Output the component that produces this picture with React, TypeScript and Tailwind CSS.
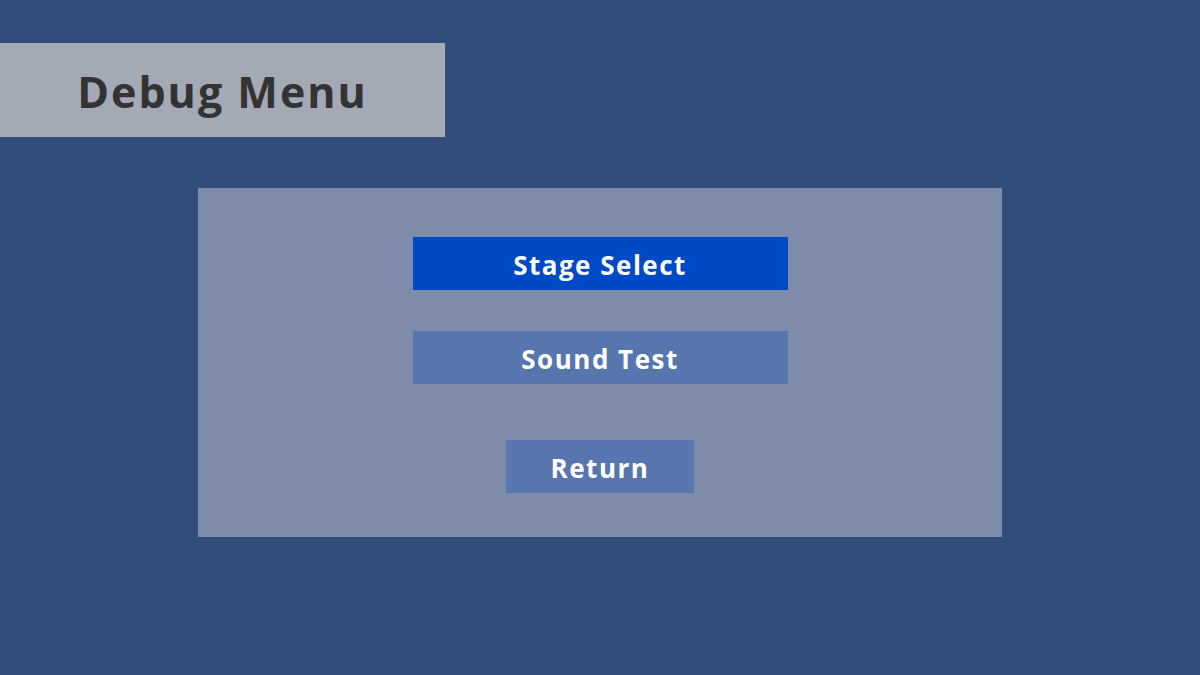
export default function App() {
  const font = { fontFamily: '"Open Sans", Lato, sans-serif' };
  return (
    <div className="w-[1200px] h-[675px] bg-[#324d7a] overflow-hidden flex flex-col" style={font}>
      <div className="mt-[43px] w-[445px] h-[94px] bg-[#a3aab5] flex items-center justify-center">
        <span className="text-[43px] font-bold text-[#333333] leading-none pt-[2px] tracking-[2px]">Debug Menu</span>
      </div>
      <div className="mt-[51px] ml-[198px] w-[804px] h-[349px] bg-[#7e8baa] flex flex-col items-center pt-[49px]">
        <div className="w-[375px] h-[53px] bg-[#0049c6] flex items-center justify-center text-white font-bold text-[26px] pt-[3px] tracking-[1.5px]">Stage Select</div>
        <div className="mt-[41px] w-[375px] h-[53px] bg-[#5776ae] flex items-center justify-center text-white font-bold text-[26px] pt-[3px] tracking-[1.5px]">Sound Test</div>
        <div className="mt-[56px] w-[188px] h-[53px] bg-[#5776ae] flex items-center justify-center text-white font-bold text-[26px] pt-[3px] tracking-[1.5px]">Return</div>
      </div>
    </div>
  );
}
